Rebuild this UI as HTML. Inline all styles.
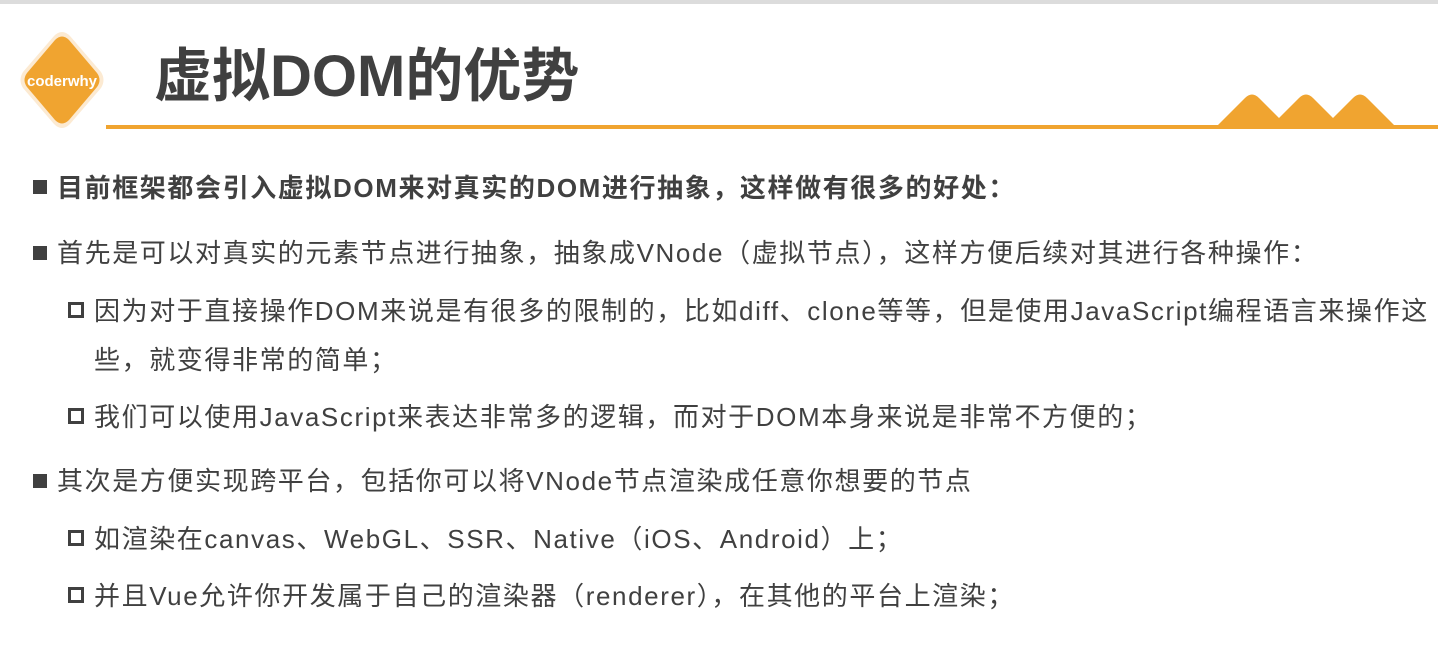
<!DOCTYPE html>
<html><head><meta charset="utf-8"><style>
body{margin:0;width:1438px;height:645px;background:#fff;position:relative;overflow:hidden;font-family:"Liberation Sans","Noto Sans CJK SC",sans-serif;color:#404040}
.t{position:absolute;font-size:26px;line-height:36px;white-space:nowrap;letter-spacing:1.6px}
.sq{position:absolute;width:14px;height:14px;background:#404040}
.hs{position:absolute;width:10px;height:10px;border:3px solid #404040}
</style></head><body>
<div style="position:absolute;left:0;top:0;width:1438px;height:4px;background:#dcdcdc"></div>
<svg style="position:absolute;left:0;top:0" width="1438" height="140">
<path d="M54 36 Q62 28 70 36 L101 72 Q106 80 101 88 L70 124 Q62 132 54 124 L23 88 Q18 80 23 72 Z" fill="#fcead2"/>
<path d="M55 40 Q62 33 69 40 L97 73 Q102 80 97 87 L69 120 Q62 127 55 120 L27 87 Q22 80 27 73 Z" fill="#f0a430"/>
<text x="62" y="86" text-anchor="middle" font-family="Liberation Sans" font-weight="bold" font-size="15" fill="#fff">coderwhy</text>
<rect x="106" y="125" width="1332" height="4" fill="#f0a430"/>
<path d="M1217 126 L1245 98 Q1252 91 1259 98 L1279 118 L1299 98 Q1306 91 1313 98 L1333 118 L1353 98 Q1360 91 1367 98 L1395 126 Z" fill="#f0a430"/>
</svg>
<div class="t" style="left:154px;top:42px;font-size:58px;line-height:70px;font-weight:bold;letter-spacing:0">虚拟DOM的优势</div>
<div class="sq" style="left:33px;top:180px"></div>
<div class="t" style="left:57px;top:170px;font-weight:bold">目前框架都会引入虚拟DOM来对真实的DOM进行抽象，这样做有很多的好处：</div>
<div class="sq" style="left:33px;top:246px"></div>
<div class="t" style="left:57px;top:235px">首先是可以对真实的元素节点进行抽象，抽象成VNode（虚拟节点），这样方便后续对其进行各种操作：</div>
<div class="hs" style="left:68px;top:302px"></div>
<div class="t" style="left:94px;top:293px">因为对于直接操作DOM来说是有很多的限制的，比如diff、clone等等，但是使用JavaScript编程语言来操作这</div>
<div class="t" style="left:94px;top:342px">些，就变得非常的简单；</div>
<div class="hs" style="left:68px;top:408px"></div>
<div class="t" style="left:94px;top:399px">我们可以使用JavaScript来表达非常多的逻辑，而对于DOM本身来说是非常不方便的；</div>
<div class="sq" style="left:33px;top:474px"></div>
<div class="t" style="left:57px;top:463px">其次是方便实现跨平台，包括你可以将VNode节点渲染成任意你想要的节点</div>
<div class="hs" style="left:68px;top:530px"></div>
<div class="t" style="left:94px;top:521px">如渲染在canvas、WebGL、SSR、Native（iOS、Android）上；</div>
<div class="hs" style="left:68px;top:587px"></div>
<div class="t" style="left:94px;top:578px">并且Vue允许你开发属于自己的渲染器（renderer），在其他的平台上渲染；</div>
</body></html>
